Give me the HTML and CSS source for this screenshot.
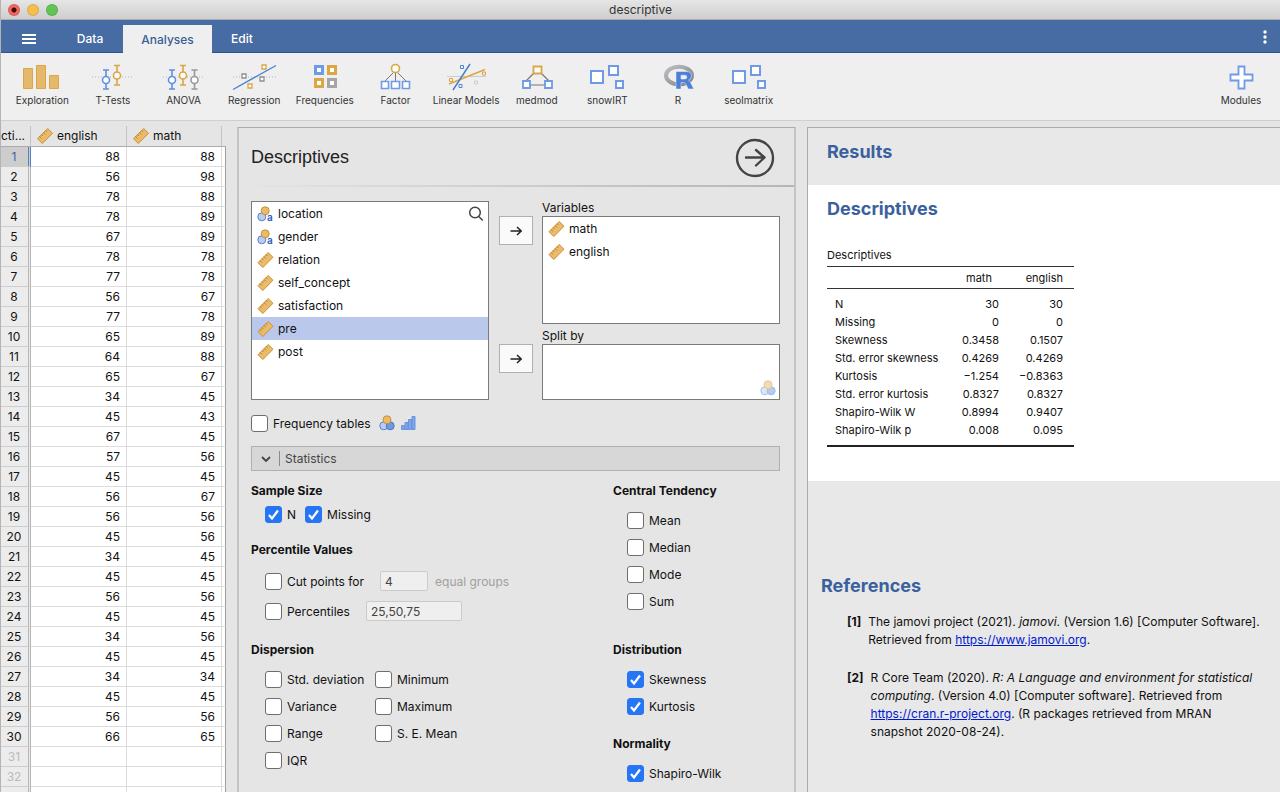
FILE: index.html
```
<!DOCTYPE html>
<html lang="en">

<head>
    <meta charset="UTF-8">
    <meta name="viewport" content="width=device-width, initial-scale=1.0">
    <title>descriptive</title>
    <link rel="stylesheet" href="styles.css">
</head>

<body>

    <!-- shared icons -->
    <svg class="sprite" aria-hidden="true">
        <symbol id="ruler" viewBox="0 0 16 16">
            <path d="M0.5 10.7 L10.7 0.5 L15.5 5.3 L5.3 15.5 Z" fill="#e9bb6b" stroke="#c98f35" stroke-width="1" stroke-linejoin="round" />
            <path d="M2.6 8.6l1.800 1.800M4.6 6.6l1.3 1.3M6.6 4.6l1.800 1.800M8.6 2.6l1.3 1.3" stroke="#b87d22" stroke-width="1" />
        </symbol>
        <symbol id="nominal" viewBox="0 0 16 16">
            <circle cx="4.8" cy="10.8" r="4" fill="#b9cdf3" stroke="#5580cc" />
            <circle cx="11.2" cy="10.8" r="4" fill="#6f98e2" stroke="#4a76c6" />
            <circle cx="8" cy="4.8" r="4" fill="#e9bb6b" stroke="#c98f35" />
        </symbol>
        <symbol id="nominal-text" viewBox="0 0 17 16">
            <circle cx="4.8" cy="10.8" r="4" fill="#b9cdf3" stroke="#5580cc" />
            <circle cx="8.2" cy="4.8" r="4" fill="#e9bb6b" stroke="#c98f35" />
            <text x="10" y="15.4" font-size="10" font-weight="600" fill="#2b62b8">a</text>
        </symbol>
        <symbol id="ordinal" viewBox="0 0 15 14">
            <path d="M0.5 9.5h3v4h-3zM4 6.5h3v7h-3zM7.5 3.5h3v10h-3zM11 0.5h3v13h-3z" fill="#7fa4e8" stroke="#6a93dc" stroke-width="1" />
        </symbol>
        <symbol id="arrow" viewBox="0 0 14 12">
            <path d="M1.5 6h10.5M8 2l4.2 4L8 10" fill="none" stroke="#222" stroke-width="1.5" />
        </symbol>
        <symbol id="squares" viewBox="0 0 48 32">
            <g fill="#fff" stroke="#6e9ae6" stroke-width="2">
                <path d="M8 10h12v12h-12z" />
                <path d="M26 5h9v9h-9z" />
                <path d="M33 20h7v7h-7z" />
            </g>
        </symbol>
    </svg>

    <div class="app">
        <header class="titlebar">
            <div class="lights">
                <span class="light close"></span>
                <span class="light minimise"></span>
                <span class="light maximise"></span>
            </div>
            <span class="window-title">descriptive</span>
        </header>

        <nav class="menubar">
            <button class="menu-button" aria-label="Menu">
                <svg width="14" height="12" viewBox="0 0 14 12"><path d="M0 2h14M0 6h14M0 10h14" stroke="#fff" stroke-width="2" /></svg>
            </button>
            <button class="tab tab-data">Data</button>
            <button class="tab tab-analyses active">Analyses</button>
            <button class="tab tab-edit">Edit</button>
            <button class="more-button" aria-label="More">
                <svg width="4" height="14" viewBox="0 0 4 14" fill="#fff"><circle cx="2" cy="2" r="1.7" /><circle cx="2" cy="7" r="1.7" /><circle cx="2" cy="12" r="1.7" /></svg>
            </button>
        </nav>

        <div class="ribbon">
            <div class="ribbon-items">
                <button class="ribbon-item">
                    <svg width="48" height="32" viewBox="0 0 48 32" fill="#e4b96c" stroke="#dba643"><path d="M5.5 7.5h9v20h-9zM18.5 4.5h9v23h-9zM31.5 14.5h9v13h-9z" /></svg>
                    Exploration
                </button>
                <button class="ribbon-item">
                    <svg width="48" height="32" viewBox="0 0 48 32" fill="none" stroke-width="1.6">
                        <path d="M3 16h42" stroke="#a9bac9" stroke-width="1" stroke-dasharray="1 2" />
                        <path d="M17 9v19M14 9h6M14 28h6" stroke="#5f8fe4" />
                        <circle cx="17" cy="19" r="3.5" fill="#fff" stroke="#5f8fe4" />
                        <path d="M28 4v20M25 4.500h6M25 24h6" stroke="#dba643" />
                        <circle cx="28" cy="14.5" r="3.5" fill="#fff" stroke="#dba643" />
                    </svg>
                    T-Tests
                </button>
                <button class="ribbon-item">
                    <svg width="48" height="32" viewBox="0 0 48 32" fill="none" stroke-width="1.6">
                        <path d="M3 16h42" stroke="#a9bac9" stroke-width="1" stroke-dasharray="1 2" />
                        <path d="M12 9v19M9 9h6M9 28h6" stroke="#5f8fe4" />
                        <circle cx="12" cy="19" r="3.5" fill="#fff" stroke="#5f8fe4" />
                        <path d="M23 4v20M20 4.500h6M20 24h6" stroke="#dba643" />
                        <circle cx="23" cy="14.5" r="3.5" fill="#fff" stroke="#dba643" />
                        <path d="M34.5 9v19M31.5 9h6M31.5 28h6" stroke="#999" />
                        <circle cx="34.5" cy="19" r="3.5" fill="#fff" stroke="#999" />
                    </svg>
                    ANOVA
                </button>
                <button class="ribbon-item">
                    <svg width="48" height="32" viewBox="0 0 48 32" fill="none">
                        <path d="M3 16h43" stroke="#a9bac9" stroke-dasharray="1 2" />
                        <path d="M3 28.5L46 4.5" stroke="#4a80d6" stroke-width="1.4" />
                        <g fill="#fff" stroke-width="1.3">
                            <path d="M32 4h4v4h-4zM18 23h4v4h-4z" stroke="#dba643" />
                            <path d="M12 13h4v4h-4zM30 16h4v4h-4z" stroke="#8f8f8f" />
                        </g>
                    </svg>
                    Regression
                </button>
                <button class="ribbon-item">
                    <svg width="48" height="32" viewBox="0 0 48 32" fill="#fff" stroke-width="3">
                        <path d="M14.5 5.5h7v7h-7z" stroke="#6e9ae6" />
                        <path d="M27.5 5.5h7v7h-7z" stroke="#dba643" />
                        <path d="M14.5 18.5h7v7h-7z" stroke="#dba643" />
                        <path d="M27.5 18.5h7v7h-7z" stroke="#a5a5a5" />
                    </svg>
                    Frequencies
                </button>
                <button class="ribbon-item">
                    <svg width="48" height="32" viewBox="0 0 48 32" fill="#fff" stroke-width="1.6">
                        <path d="M24 10L14 20M24.5 10v10M25 10l10 10" stroke="#777" stroke-width="1" />
                        <circle cx="24.5" cy="7.5" r="4" stroke="#dba643" />
                        <path d="M10.5 20.5h7v7h-7zM20.5 20.5h8v7h-8zM31.5 20.5h7v7h-7z" stroke="#6e9ae6" />
                    </svg>
                    Factor
                </button>
                <button class="ribbon-item">
                    <svg width="48" height="32" viewBox="0 0 48 32" fill="none">
                        <path d="M5 15.500h39" stroke="#ccc" />
                        <path d="M7 23L43 8.500" stroke="#dba643" stroke-width="1.4" />
                        <path d="M11 29L28 3" stroke="#3f7bd0" stroke-width="1.4" />
                        <path d="M18.5 4.5h3v3h-3zM17 23.5h3v3h-3z" stroke="#4a86dc" />
                        <path d="M7.5 17.5h3v3h-3zM40.5 11h3v3h-3z" stroke="#dba643" />
                        <path d="M32.5 20h3v3h-3z" stroke="#ccc" />
                    </svg>
                    Linear Models
                </button>
                <button class="ribbon-item">
                    <svg width="48" height="32" viewBox="0 0 48 32" fill="#fff" stroke-width="1.8">
                        <path d="M24 9L13 20M25 9l11 11M14 24h20" stroke="#777" stroke-width="1.2" />
                        <path d="M20.5 5.5h8v7h-8z" stroke="#dba643" />
                        <path d="M10 20h7v7h-7zM32 20h7v7h-7z" stroke="#6e9ae6" />
                    </svg>
                    medmod
                </button>
                <button class="ribbon-item">
                    <svg width="48" height="32"><use href="#squares" /></svg>
                    snowIRT
                </button>
                <button class="ribbon-item">
                    <svg width="48" height="32" viewBox="0 0 48 32">
                        <defs>
                            <linearGradient id="ring" x1="0" y1="0" x2="1" y2="1">
                                <stop offset="0" stop-color="#bcbec2" />
                                <stop offset="1" stop-color="#808288" />
                            </linearGradient>
                        </defs>
                        <ellipse cx="25" cy="14.5" rx="13" ry="8.8" fill="none" stroke="url(#ring)" stroke-width="4" />
                        <path d="M22 10.5h10.500q5 0 5 4.500 0 3-3 4.200 1 .4 1.800 1.800l3.500 7h-5.500l-2.800-5.500q-.6-1-1.500-1h-3v6.500h-5zM27 14.2v3.800h4q1.800 0 1.800-1.900t-1.800-1.900z" fill="#4a80dc" stroke="#efefef" stroke-width="0.5" fill-rule="evenodd" />
                    </svg>
                    R
                </button>
                <button class="ribbon-item">
                    <svg width="48" height="32"><use href="#squares" /></svg>
                    seolmatrix
                </button>
            </div>
            <button class="ribbon-item modules">
                <svg width="48" height="32" viewBox="0 0 48 32"><path d="M21.5 5.5h6v8h8v6h-8v8h-6v-8h-8v-6h8z" fill="#fff" stroke="#6e9ae6" stroke-width="1.8" /></svg>
                Modules
            </button>
        </div>

        <main class="workspace">
            <section class="data">
                <table class="sheet">
                    <colgroup><col class="col-num"><col class="col-english"><col class="col-math"><col></colgroup>
                    <thead>
                        <tr>
                            <th class="clipped">cti...</th>
                            <th><span class="column-name"><svg width="16" height="16"><use href="#ruler" /></svg>english</span></th>
                            <th><span class="column-name"><svg width="16" height="16"><use href="#ruler" /></svg>math</span></th>
                            <th></th>
                        </tr>
                    </thead>
                    <tbody>
                        <tr class="selected"><th>1</th><td>88</td><td>88</td><td></td></tr>
                        <tr><th>2</th><td>56</td><td>98</td><td></td></tr>
                        <tr><th>3</th><td>78</td><td>88</td><td></td></tr>
                        <tr><th>4</th><td>78</td><td>89</td><td></td></tr>
                        <tr><th>5</th><td>67</td><td>89</td><td></td></tr>
                        <tr><th>6</th><td>78</td><td>78</td><td></td></tr>
                        <tr><th>7</th><td>77</td><td>78</td><td></td></tr>
                        <tr><th>8</th><td>56</td><td>67</td><td></td></tr>
                        <tr><th>9</th><td>77</td><td>78</td><td></td></tr>
                        <tr><th>10</th><td>65</td><td>89</td><td></td></tr>
                        <tr><th>11</th><td>64</td><td>88</td><td></td></tr>
                        <tr><th>12</th><td>65</td><td>67</td><td></td></tr>
                        <tr><th>13</th><td>34</td><td>45</td><td></td></tr>
                        <tr><th>14</th><td>45</td><td>43</td><td></td></tr>
                        <tr><th>15</th><td>67</td><td>45</td><td></td></tr>
                        <tr><th>16</th><td>57</td><td>56</td><td></td></tr>
                        <tr><th>17</th><td>45</td><td>45</td><td></td></tr>
                        <tr><th>18</th><td>56</td><td>67</td><td></td></tr>
                        <tr><th>19</th><td>56</td><td>56</td><td></td></tr>
                        <tr><th>20</th><td>45</td><td>56</td><td></td></tr>
                        <tr><th>21</th><td>34</td><td>45</td><td></td></tr>
                        <tr><th>22</th><td>45</td><td>45</td><td></td></tr>
                        <tr><th>23</th><td>56</td><td>56</td><td></td></tr>
                        <tr><th>24</th><td>45</td><td>45</td><td></td></tr>
                        <tr><th>25</th><td>34</td><td>56</td><td></td></tr>
                        <tr><th>26</th><td>45</td><td>45</td><td></td></tr>
                        <tr><th>27</th><td>34</td><td>34</td><td></td></tr>
                        <tr><th>28</th><td>45</td><td>45</td><td></td></tr>
                        <tr><th>29</th><td>56</td><td>56</td><td></td></tr>
                        <tr><th>30</th><td>66</td><td>65</td><td></td></tr>
                        <tr class="unused"><th>31</th><td></td><td></td><td></td></tr>
                        <tr class="unused"><th>32</th><td></td><td></td><td></td></tr>
                        <tr class="unused"><th></th><td></td><td></td><td></td></tr>
                    </tbody>
                </table>
            </section>

            <section class="options">
                <header class="options-header">
                    <h2>Descriptives</h2>
                    <button class="hide-button" aria-label="Hide options">
                        <svg width="40" height="40" viewBox="0 0 40 40" fill="none" stroke="#444"><circle cx="20" cy="20" r="18" stroke-width="2.4" /><path d="M11 19.5h18M21 12l8.500 7.500-8.500 8" stroke-width="2.4" stroke-linecap="round" stroke-linejoin="round" /></svg>
                    </button>
                </header>

                <div class="options-body">
                    <div class="variable-supplier">
                        <div class="variable-list source">
                            <button class="search" aria-label="Search">
                                <svg width="16" height="16" viewBox="0 0 16 16" fill="none" stroke="#444" stroke-width="1.5"><circle cx="7" cy="6.5" r="5.3" /><path d="M10.800 10.500l4 4" /></svg>
                            </button>
                            <ul>
                                <li><svg width="17" height="16"><use href="#nominal-text" /></svg>location</li>
                                <li><svg width="17" height="16"><use href="#nominal-text" /></svg>gender</li>
                                <li><svg width="17" height="16"><use href="#ruler" /></svg>relation</li>
                                <li><svg width="17" height="16"><use href="#ruler" /></svg>self_concept</li>
                                <li><svg width="17" height="16"><use href="#ruler" /></svg>satisfaction</li>
                                <li class="picked"><svg width="17" height="16"><use href="#ruler" /></svg>pre</li>
                                <li><svg width="17" height="16"><use href="#ruler" /></svg>post</li>
                            </ul>
                        </div>
                        <div class="targets">
                            <div class="target">
                                <button class="assign" aria-label="Add to variables"><svg width="14" height="12"><use href="#arrow" /></svg></button>
                                <div class="target-box">
                                    <h3>Variables</h3>
                                    <ul class="variable-list tall">
                                        <li><svg width="17" height="16"><use href="#ruler" /></svg>math</li>
                                        <li><svg width="17" height="16"><use href="#ruler" /></svg>english</li>
                                    </ul>
                                </div>
                            </div>
                            <div class="target">
                                <button class="assign" aria-label="Add to split by"><svg width="14" height="12"><use href="#arrow" /></svg></button>
                                <div class="target-box">
                                    <h3>Split by</h3>
                                    <div class="variable-list short"><svg class="faded" width="16" height="16"><use href="#nominal" /></svg></div>
                                </div>
                            </div>
                        </div>
                    </div>

                    <div class="frequency">
                        <label class="check"><input type="checkbox">Frequency tables</label>
                        <svg width="16" height="16"><use href="#nominal" /></svg>
                        <svg width="15" height="14"><use href="#ordinal" /></svg>
                    </div>

                    <button class="collapse">
                        <svg width="12" height="8" viewBox="0 0 12 8"><path d="M2 2l4 4 4-4" fill="none" stroke="#444" stroke-width="1.8" /></svg>
                        <span>Statistics</span>
                    </button>

                    <div class="statistics">
                        <div class="column">
                            <div class="group">
                                <h4>Sample Size</h4>
                                <div class="checks inline">
                                    <label class="check"><input type="checkbox" checked>N</label>
                                    <label class="check"><input type="checkbox" checked>Missing</label>
                                </div>
                            </div>
                            <div class="group">
                                <h4>Percentile Values</h4>
                                <div class="checks roomy">
                                    <div class="field">
                                        <label class="check"><input type="checkbox">Cut points for</label>
                                        <input class="text cut" type="text" value="4" aria-label="Number of groups" disabled>
                                        <span class="suffix">equal groups</span>
                                    </div>
                                    <div class="field">
                                        <label class="check"><input type="checkbox">Percentiles</label>
                                        <input class="text percentiles" type="text" value="25,50,75" aria-label="Percentile list" disabled>
                                    </div>
                                </div>
                            </div>
                        </div>
                        <div class="column">
                            <div class="group">
                                <h4>Central Tendency</h4>
                                <div class="checks">
                                    <label class="check"><input type="checkbox">Mean</label>
                                    <label class="check"><input type="checkbox">Median</label>
                                    <label class="check"><input type="checkbox">Mode</label>
                                    <label class="check"><input type="checkbox">Sum</label>
                                </div>
                            </div>
                        </div>
                        <div class="column">
                            <div class="group">
                                <h4>Dispersion</h4>
                                <div class="checks two">
                                    <label class="check"><input type="checkbox">Std. deviation</label>
                                    <label class="check"><input type="checkbox">Minimum</label>
                                    <label class="check"><input type="checkbox">Variance</label>
                                    <label class="check"><input type="checkbox">Maximum</label>
                                    <label class="check"><input type="checkbox">Range</label>
                                    <label class="check"><input type="checkbox">S. E. Mean</label>
                                    <label class="check"><input type="checkbox">IQR</label>
                                </div>
                            </div>
                        </div>
                        <div class="column">
                            <div class="group">
                                <h4>Distribution</h4>
                                <div class="checks">
                                    <label class="check"><input type="checkbox" checked>Skewness</label>
                                    <label class="check"><input type="checkbox" checked>Kurtosis</label>
                                </div>
                            </div>
                            <div class="group">
                                <h4>Normality</h4>
                                <div class="checks">
                                    <label class="check"><input type="checkbox" checked>Shapiro-Wilk</label>
                                </div>
                            </div>
                        </div>
                    </div>
                </div>
            </section>

            <section class="results">
                <h1>Results</h1>
                <div class="analysis">
                    <h1>Descriptives</h1>
                    <table class="results-table">
                        <caption>Descriptives</caption>
                        <thead>
                            <tr><th></th><th>math</th><th>english</th></tr>
                        </thead>
                        <tbody>
                            <tr><th>N</th><td>30</td><td>30</td></tr>
                            <tr><th>Missing</th><td>0</td><td>0</td></tr>
                            <tr><th>Skewness</th><td>0.3458</td><td>0.1507</td></tr>
                            <tr><th>Std. error skewness</th><td>0.4269</td><td>0.4269</td></tr>
                            <tr><th>Kurtosis</th><td>−1.254</td><td>−0.8363</td></tr>
                            <tr><th>Std. error kurtosis</th><td>0.8327</td><td>0.8327</td></tr>
                            <tr><th>Shapiro-Wilk W</th><td>0.8994</td><td>0.9407</td></tr>
                            <tr><th>Shapiro-Wilk p</th><td>0.008</td><td>0.095</td></tr>
                        </tbody>
                    </table>
                </div>
                <div class="references">
                    <h1>References</h1>
                    <div class="reference">
                        <b>[1]</b>
                        <p>The jamovi project (2021). <i>jamovi</i>. (Version 1.6) [Computer Software]. Retrieved from <a href="https://www.jamovi.org">https://www.jamovi.org</a>.</p>
                    </div>
                    <div class="reference">
                        <b>[2]</b>
                        <p>R Core Team (2020). <i>R: A Language and environment for statistical computing</i>. (Version 4.0) [Computer software]. Retrieved from <a href="https://cran.r-project.org">https://cran.r-project.org</a>. (R packages retrieved from MRAN snapshot 2020-08-24).</p>
                    </div>
                </div>
            </section>
        </main>
    </div>

</body>

</html>
```

FILE: styles.css
```
* {
    box-sizing: border-box;
}

body {
    margin: 0;
    font-family: Inter, "Liberation Sans", sans-serif;
    font-size: 12px;
    color: #111;
    background-color: #e5e5e5;
}

button {
    font: inherit;
    color: inherit;
    border: none;
    background: none;
    padding: 0;
    cursor: pointer;
}

svg {
    display: block;
    flex-shrink: 0;
}

ul {
    list-style: none;
    margin: 0;
    padding: 0;
}

h1, h2, h3, h4, p {
    margin: 0;
}

.sprite {
    position: absolute;
    width: 0;
    height: 0;
}

.app {
    display: flex;
    flex-direction: column;
    height: 100vh;
    overflow: hidden;
    border-left: 1px solid #b4b4b4;
}

/* window title */
.titlebar {
    display: grid;
    grid-template-columns: 1fr auto 1fr;
    align-items: center;
    height: 20px;
    flex-shrink: 0;
    background: linear-gradient(#e6e6e6, #cecece);
    border-bottom: 1px solid #adadad;
    color: #333;
}

.lights {
    display: flex;
    gap: 7px;
    padding-left: 7px;
}

.light {
    width: 12px;
    height: 12px;
    border-radius: 50%;
    border: 1px solid rgba(0, 0, 0, 0.1);
}

.close {
    background: radial-gradient(circle, #4c0502 2px, #ed6a5f 3px);
}

.minimise {
    background-color: #f5bf4f;
}

.maximise {
    background-color: #61c554;
}

/* blue tab bar */
.menubar {
    display: flex;
    align-items: flex-end;
    height: 33px;
    flex-shrink: 0;
    background-color: #476ca4;
    border-bottom: 1px solid #2c558f;
    color: #fff;
    font-weight: 500;
}

.menu-button {
    width: 56px;
    height: 27px;
    display: flex;
    align-items: center;
    justify-content: center;
}

.tab {
    height: 27px;
}

.tab-data {
    width: 66px;
}

.tab-analyses {
    width: 89px;
}

.tab-edit {
    width: 60px;
}

.tab.active {
    background-color: #efefef;
    color: #3a5f98;
    height: 28px;
    margin-bottom: -1px;
}

.more-button {
    margin-left: auto;
    width: 31px;
    height: 30px;
    display: flex;
    align-items: center;
    justify-content: center;
}

/* analyses ribbon */
.ribbon {
    display: flex;
    justify-content: space-between;
    flex-shrink: 0;
    height: 68px;
    padding: 8px 4px 0 6px;
    background-color: #efefef;
    border-bottom: 1px solid #cfcfcf;
}

.ribbon-items {
    display: grid;
    grid-template-columns: repeat(11, 1fr);
    width: 777px;
}

.ribbon-item {
    display: flex;
    flex-direction: column;
    align-items: center;
    height: 46px;
    font-size: 10px;
    line-height: 14px;
    white-space: nowrap;
    color: #333;
}

.modules {
    width: 70px;
}

.workspace {
    flex: 1;
    min-height: 0;
    display: grid;
    grid-template-columns: 225px 559px minmax(0, 1fr);
    column-gap: 11px;
}

/* spreadsheet */
.data {
    overflow: hidden;
    padding-top: 5px;
}

.sheet {
    width: 100%;
    table-layout: fixed;
    border-collapse: separate;
    border-spacing: 0;
}

.col-num {
    width: 30px;
}

.col-english {
    width: 96px;
}

.col-math {
    width: 95px;
}

.sheet th {
    font-weight: 400;
    padding: 0;
}

.sheet thead th {
    height: 21px;
    border-bottom: 1px solid #ababab;
    border-right: 1px solid #c4c4c4;
    line-height: 20px;
}

.sheet thead th:last-child {
    border-right: none;
}

.sheet .clipped {
    text-align: left;
    white-space: nowrap;
}

.column-name {
    display: flex;
    align-items: center;
    gap: 4px;
    padding-left: 6px;
}

.sheet tbody th {
    height: 20px;
    padding-right: 1px;
    border-right: 3px double #b5b5b5;
    border-bottom: 1px solid #cdcdcd;
    background-color: #ececec;
}

.sheet tbody td {
    padding: 0 6px 0 0;
    text-align: right;
    background-color: #fff;
    border-right: 1px solid #dcdcdc;
    border-bottom: 1px solid #dcdcdc;
}

.sheet tbody td:last-child {
    padding: 0;
    border-right-color: #9d9d9d;
}

.sheet .selected th {
    background-color: #cdcdcd;
    color: #3a64a8;
    border-right-color: #5a80c0;
}

.sheet .unused th {
    color: #bbb;
}

/* options panel */
.options {
    margin-top: 6px;
    border: 1px solid #ababab;
    border-left: 2px solid #c4c4c4;
    border-right: 2px solid #c4c4c4;
    border-bottom: none;
    overflow: hidden;
}

.options-header {
    display: flex;
    align-items: center;
    justify-content: space-between;
    height: 59px;
    padding: 2px 19px 0 12px;
    border-bottom: 2px solid;
    border-image: linear-gradient(90deg, #e5e5e5, #b5b5b5) 1;
}

.options-header h2 {
    font-family: "Liberation Sans", Arial, sans-serif;
    font-size: 18px;
    font-weight: 400;
    color: #222;
}

.options-body {
    padding: 14px 14px 0 12px;
}

.variable-supplier {
    display: grid;
    grid-template-columns: 238px 1fr;
    column-gap: 10px;
}

.variable-list {
    background-color: #fff;
    border: 1px solid #7b7b7b;
}

.variable-list li {
    display: flex;
    align-items: center;
    gap: 4px;
    height: 23px;
    padding-left: 5px;
}

.variable-list .picked {
    background-color: #b9c8eb;
}

.source {
    position: relative;
    height: 199px;
}

.search {
    position: absolute;
    top: 4px;
    right: 4px;
}

.target {
    display: flex;
    align-items: flex-start;
    gap: 9px;
}

.assign {
    display: flex;
    align-items: center;
    justify-content: center;
    width: 34px;
    height: 29px;
    margin-top: 15px;
    border: 1px solid #b0b0b0;
    background-color: #fafafa;
}

.target-box {
    flex: 1;
}

.target-box h3 {
    height: 15px;
    line-height: 14px;
    font-size: 12px;
    font-weight: 400;
}

.target + .target {
    margin-top: 5px;
}

.tall {
    height: 108px;
}

.short {
    display: flex;
    align-items: flex-end;
    justify-content: flex-end;
    height: 56px;
    padding: 3px;
}

.faded {
    opacity: 0.5;
}

.check {
    display: flex;
    align-items: center;
    gap: 5px;
    white-space: nowrap;
}

.check input {
    appearance: none;
    flex-shrink: 0;
    width: 17px;
    height: 17px;
    margin: 0;
    border: 1px solid #6e6e6e;
    border-radius: 3px;
    background-color: #fff;
}

.check input:checked {
    border-color: #2575f5;
    background: #2575f5 url("data:image/svg+xml,%3Csvg xmlns='http://www.w3.org/2000/svg' viewBox='0 0 15 15'%3E%3Cpath d='M3 8l3 3.500 6-8' fill='none' stroke='white' stroke-width='2.200'/%3E%3C/svg%3E");
}

.frequency {
    display: flex;
    align-items: center;
    gap: 6px;
    height: 24px;
    margin-top: 11px;
}

.frequency .check {
    margin-right: 2px;
}

.collapse {
    display: flex;
    align-items: center;
    gap: 7px;
    width: 100%;
    height: 25px;
    margin-top: 11px;
    padding-left: 8px;
    border: 1px solid #b0b0b0;
    background-color: #d7d7d7;
    color: #444;
}

.collapse span {
    border-left: 1px solid #8a8a8a;
    padding-left: 5px;
}

.statistics {
    display: grid;
    grid-template-columns: 362px 1fr;
    row-gap: 14px;
    margin-top: 10px;
}

.group h4 {
    height: 20px;
    line-height: 20px;
    font-size: 12px;
    font-weight: 700;
}

.group + .group {
    margin-top: 14px;
}

.checks {
    display: grid;
    grid-auto-rows: 27px;
    padding: 6px 0 0 14px;
}

.inline {
    display: flex;
    gap: 9px;
    height: 25px;
    padding-top: 2px;
}

.two {
    grid-template-columns: 110px 1fr;
}

.roomy {
    grid-auto-rows: 30px;
}

.field {
    display: flex;
    align-items: center;
}

.text {
    height: 20px;
    padding: 0 4px;
    border: 1px solid #cbcbcb;
    border-radius: 2px;
    background-color: #efefef;
    color: #444;
    font: inherit;
}

.cut {
    width: 48px;
    margin: 0 7px 0 16px;
}

.percentiles {
    width: 96px;
    margin-left: 16px;
}

.suffix {
    color: #a0a0a0;
}

/* results panel */
.results {
    margin-top: 6px;
    border-top: 1px solid #ababab;
    border-left: 1px solid #ababab;
    background-color: #e8e8e8;
    overflow: hidden;
}

.results h1 {
    font-size: 18px;
    line-height: 24px;
    font-weight: 700;
    color: #3a619d;
}

.results > h1 {
    padding: 12px 19px 21px;
}

.analysis {
    padding: 12px 19px 34px;
    background-color: #fff;
}

.results-table {
    width: 247px;
    margin-top: 27px;
    border-collapse: collapse;
    border-bottom: 2px solid #222;
    font-size: 11px;
    line-height: 14px;
}

.results-table caption {
    text-align: left;
    padding-bottom: 4px;
}

.results-table th {
    font-weight: 400;
}

.results-table thead th {
    height: 22px;
    padding: 0 11px;
    border-top: 1px solid #333;
    border-bottom: 1px solid #333;
    text-align: right;
}

.results-table tbody th {
    padding: 2px 0 2px 8px;
    text-align: left;
}

.results-table td {
    padding: 2px 11px;
    text-align: right;
}

.results-table td:nth-child(2) {
    padding-right: 4px;
}

.results-table tbody tr:first-child > * {
    padding-top: 8px;
}

.results-table tbody tr:last-child > * {
    padding-bottom: 8px;
}

.references {
    padding: 93px 16px 0 13px;
}

.reference {
    display: flex;
    gap: 7px;
    padding-left: 26px;
    margin: 15px 0 20px;
    line-height: 18px;
}

.reference b {
    font-weight: 700;
}

.reference a {
    color: #0018d0;
}
```
